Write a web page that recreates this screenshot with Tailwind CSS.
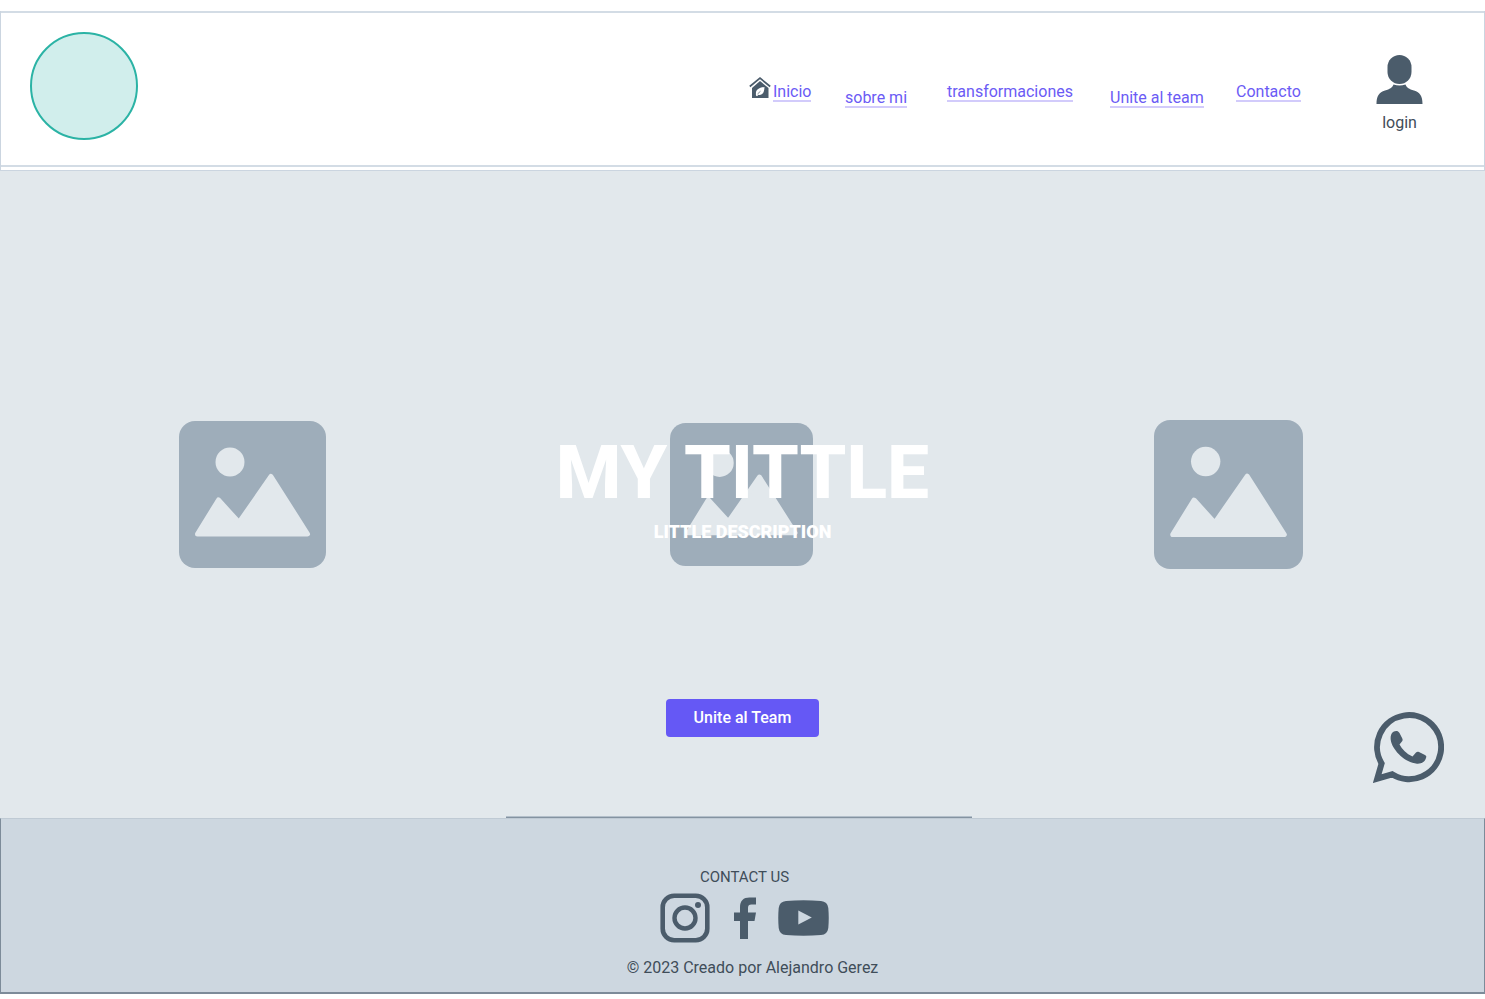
<!DOCTYPE html>
<html lang="es">
<head>
<meta charset="utf-8">
<meta name="viewport" content="width=device-width, initial-scale=1">
<title>My Tittle</title>
<script src="https://cdn.jsdelivr.net/npm/@tailwindcss/browser@4"></script>
</head>
<body class="flex min-h-screen flex-col bg-white pt-[11px] pb-[5px] font-['Roboto',sans-serif] text-base text-[#4b5c6b]">
<svg class="hidden" aria-hidden="true">
  <symbol id="picture" viewBox="0 0 147 147">
    <rect width="147" height="147" rx="16" fill="#9eadba"/>
    <circle cx="51" cy="41" r="14.5" fill="#e2e8ec"/>
    <path d="M18.500 113L39.500 79L60 101.500L92 55.500L128.500 113Z" fill="#e2e8ec" stroke="#e2e8ec" stroke-width="5" stroke-linejoin="round"/>
  </symbol>
</svg>

<header class="border-x border-[#cbd5e0]">
  <div class="flex items-start justify-between border-y-2 border-[#d3dce5] pt-[19px] pr-[61px] pb-[25px] pl-[29px]">
    <a href="#" aria-label="Portada" class="size-[108px] rounded-full border-2 border-[#2bb3a5] bg-[#d1eeec]"></a>
    <div class="flex items-start pt-[22px]">
      <nav aria-label="Principal" class="mt-[30px] grid h-6 grid-cols-[96px_102px_163px_126px_140px] leading-4 text-[#6b5bf5]">
        <a href="#" class="flex items-start gap-[2px] self-start">
          <svg class="-mt-[7px] size-[22px]" viewBox="0 0 22 22" fill="#4b5c6b" aria-hidden="true">
            <path d="M0.800 9.500L11 1.200L21.200 9.500" fill="none" stroke="#4b5c6b" stroke-width="1.700"/>
            <path d="M11 4L19.500 11V21H3V11Z"/>
            <path d="M7 18.500C6.300 13 9 10.800 15.500 10C15.300 15.500 13.500 18.800 9.500 17.800L8 19.200Z" fill="#fff"/>
            <path d="M8.500 17L11.500 14.200" stroke="#4b5c6b" stroke-width=".7"/>
          </svg>
          <span class="border-b-2 border-[#d2cbfb]">Inicio</span>
        </a>
        <a href="#" class="self-end justify-self-start border-b-2 border-[#d2cbfb]">sobre mi</a>
        <a href="#" class="self-start justify-self-start border-b-2 border-[#d2cbfb]">transformaciones</a>
        <a href="#" class="self-end justify-self-start border-b-2 border-[#d2cbfb]">Unite al team</a>
        <a href="#" class="self-start justify-self-start border-b-2 border-[#d2cbfb]">Contacto</a>
      </nav>
      <a href="#" class="flex flex-col items-center gap-2 leading-5 text-[#3f4d59]">
        <svg class="h-[51px] w-[47px]" viewBox="0 0 47 51" fill="#4b5c6b" aria-hidden="true">
          <rect x="11.500" y="1" width="24" height="29" rx="12"/>
          <path d="M17.500 30.500Q23.500 32.500 29.500 30.500C31 34 33 35 38 36.500C44 38.500 46.500 42 46.500 50H.5C.5 42 3 38.500 9 36.500C14 35 16 34 17.500 30.500Z"/>
        </svg>
        <span>login</span>
      </a>
    </div>
  </div>
  <div class="h-1 border-b border-[#cbd5e0]"></div>
</header>

<main class="relative flex flex-1 items-center justify-between bg-[#e2e8ec] pr-[182px] pl-[179px]">
  <svg class="size-[147px]" role="img" aria-label="Imagen 1"><use href="#picture"/></svg>
  <svg class="ml-[3px] size-[143px]" role="img" aria-label="Imagen 2"><use href="#picture"/></svg>
  <svg class="size-[149px]" role="img" aria-label="Imagen 3"><use href="#picture"/></svg>
  <div class="absolute inset-x-0 top-0 flex flex-col items-center pt-[261px] text-white">
    <h1 class="text-[75px] leading-[80px] font-extrabold">MY TITTLE</h1>
    <p class="mt-2 text-lg leading-6 font-black">LITTLE DESCRIPTION</p>
    <button type="button" class="mt-[155px] h-[38px] w-[153px] rounded bg-[#6558f5] font-medium">Unite al Team</button>
  </div>
  <a href="#" aria-label="WhatsApp" class="absolute right-[41px] bottom-[35px]">
    <svg class="size-[71px]" viewBox="0 0 71 71" aria-hidden="true">
      <path d="M8.600 51.500A32 32 0 1 1 19.200 62.300L4.200 66.700Z" fill="none" stroke="#4b5c6b" stroke-width="6"/>
      <path d="M19 21C21 18.500 25 18 26.500 21L29.300 26.500C30 28 29.500 29 28.500 30L26.500 32.500C29 37.500 33.500 41.800 39.500 44.500L43 40.500C44 39.500 45 39.500 46 40L52 43C53.500 44 53.500 44.500 53 46C52 50 48 52 44 51.700C32 50.500 20.500 39 18 29.500C17.300 26 17.500 23 19 21Z" fill="#4b5c6b"/>
    </svg>
  </a>
  <div class="absolute right-[513px] bottom-0 left-[506px] h-[2px] border-t border-[#b3bfca] bg-[#8493a1]"></div>
</main>

<footer class="flex flex-col items-center border-x border-t border-b-2 border-x-[#7c8b99] border-t-[#bfcad4] border-b-[#7c8b99] bg-[#cdd7e0] pt-12 pb-[14px] leading-5 text-[#3f4d59]">
  <h2 class="pl-1 text-[15px]">CONTACT US</h2>
  <div class="mt-[6px] flex items-center pl-1">
    <a href="#" aria-label="Instagram">
      <svg class="size-[50px]" viewBox="0 0 50 50" fill="none" stroke="#4b5c6b" aria-hidden="true">
        <rect x="2.700" y="2.700" width="44.600" height="44.600" rx="11.500" stroke-width="4.600"/>
        <circle cx="25" cy="25" r="10.500" stroke-width="4.400"/>
        <circle cx="38" cy="12" r="3" fill="#4b5c6b" stroke="none"/>
      </svg>
    </a>
    <a href="#" aria-label="Facebook" class="ml-6">
      <svg class="h-[42px] w-[22px]" viewBox="0 0 22 42" fill="#4b5c6b" aria-hidden="true">
        <path d="M6 42V24H0V15.500H6V10.500C6 3.500 9.500 .5 15.500 .5H22V7.500H17.500C15 7.500 14 8.500 14 11V15.500H22L20.500 24H14V42Z"/>
      </svg>
    </a>
    <a href="#" aria-label="YouTube" class="ml-[22px]">
      <svg class="h-[36px] w-[51px]" viewBox="0 0 51 36" aria-hidden="true">
        <path d="M8 1Q25.500 -.5 43 1Q49.500 1.500 50.300 8Q51.200 18 50.300 28Q49.500 34.500 43 35Q25.500 36.500 8 35Q1.500 34.500 .7 28Q-.2 18 .7 8Q1.500 1.500 8 1Z" fill="#4b5c6b"/>
        <path d="M20.300 10.500L33.800 17.500L20.300 24.500Z" fill="#cdd7e0"/>
      </svg>
    </a>
  </div>
  <p class="mt-[15px] pl-5">© 2023 Creado por Alejandro Gerez</p>
</footer>
</body>
</html>
